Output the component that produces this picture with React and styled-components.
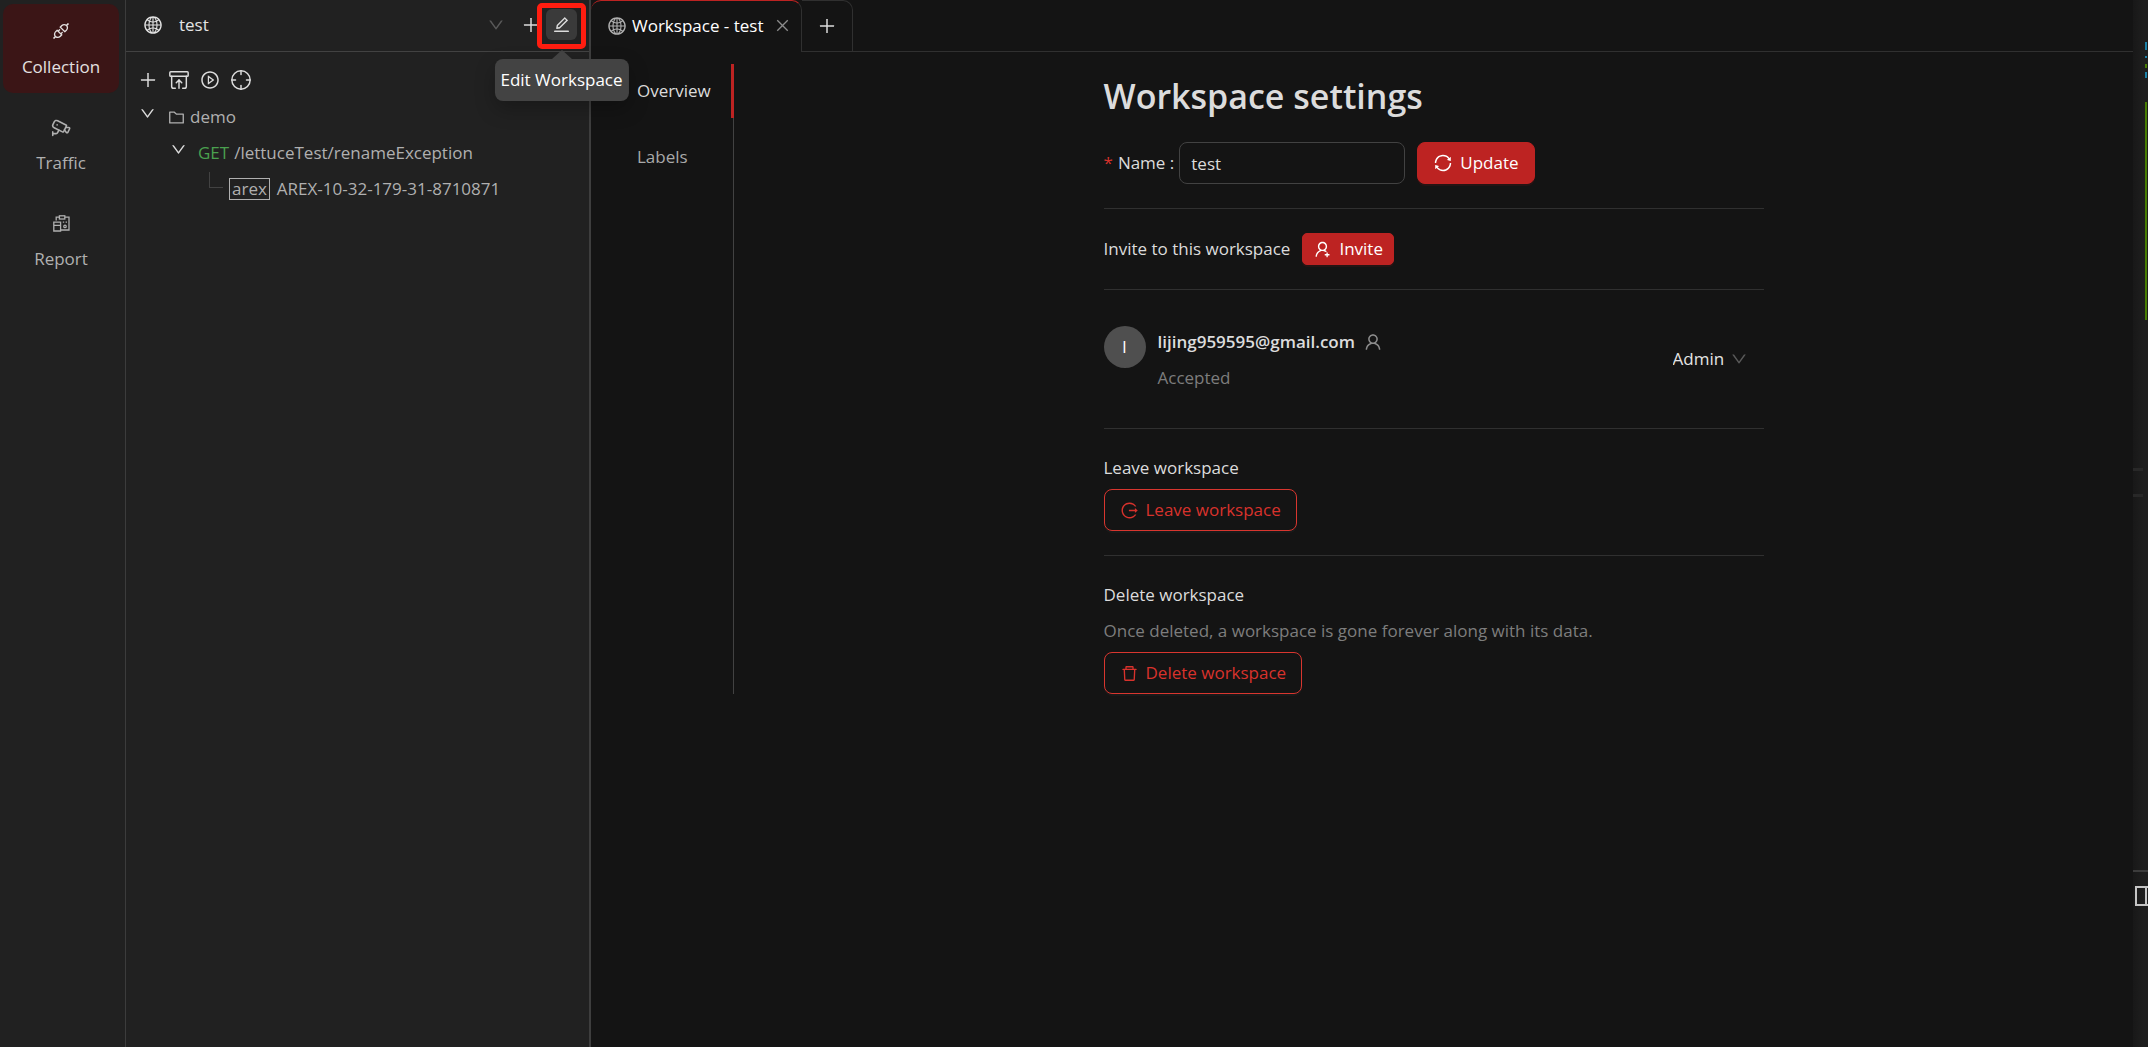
import React from "react";
import styled, { createGlobalStyle } from "styled-components";
import {
  AiOutlineApi,
  AiOutlineClose,
  AiOutlineDelete,
  AiOutlineDown,
  AiOutlineEdit,
  AiOutlineFolder,
  AiOutlineGlobal,
  AiOutlineLogout,
  AiOutlinePlayCircle,
  AiOutlinePlus,
  AiOutlineSync,
  AiOutlineUser,
  AiOutlineUserAdd,
} from "react-icons/ai";
import { ArchiveRestore, Cctv, Crosshair } from "lucide-react";

const font = '"Segoe UI", "Open Sans", "Noto Sans", sans-serif';

const GlobalStyle = createGlobalStyle`
  *, *::before, *::after { box-sizing: border-box; }
  body {
    margin: 0;
    background: #141414;
    color: #dcdcdc;
    font: 17px/28px ${font};
  }
  button, input, select { font: inherit; color: inherit; }
  button { cursor: pointer; }
  svg { flex: none; display: block; }
`;

const Shell = styled.div`
  display: flex;
  min-height: 100vh;
`;

/* Primary navigation */
const Rail = styled.nav`
  flex: none;
  width: 126px;
  padding: 4px 6px 4px 3px;
  display: flex;
  flex-direction: column;
  gap: 7px;
  background: #212121;
  border-right: 1px solid #3c3c3c;
`;

const RailItem = styled.button`
  height: 89px;
  padding: 9px 0 12px;
  border: 0;
  border-radius: 10px;
  display: flex;
  flex-direction: column;
  align-items: center;
  justify-content: space-between;
  background: ${(p) => (p.$active ? "#3b1516" : "transparent")};
  color: ${(p) => (p.$active ? "#e4e0e0" : "#b0b0b0")};
`;

const RailIcon = styled.span`
  height: 36px;
  display: flex;
  align-items: center;
`;

/* Workspace sidebar */
const Sidebar = styled.aside`
  flex: none;
  width: 465px;
  position: relative;
  z-index: 1;
  background: #212121;
  border-right: 2px solid #3e3e3e;
`;

const SidebarHeader = styled.header`
  height: 52px;
  padding: 0 12px 2px 17px;
  display: flex;
  align-items: center;
  border-bottom: 1px solid #424242;
`;

const SelectBox = styled.label`
  position: relative;
  display: flex;
  align-items: center;
  flex: ${(p) => (p.$grow ? 1 : "none")};
  color: #e4e4e4;

  & > svg.arrow {
    position: absolute;
    right: ${(p) => (p.$grow ? "10px" : "16px")};
    color: #5a5a5a;
    pointer-events: none;
  }
`;

const Select = styled.select`
  appearance: none;
  border: 0;
  outline: 0;
  background: transparent;
  flex: 1;
  height: 32px;
  padding: 0 ${(p) => p.$end}px 0 ${(p) => p.$start}px;
`;

const IconButton = styled.button`
  width: 31px;
  height: 31px;
  padding: 0;
  border: 0;
  border-radius: 6px;
  display: flex;
  align-items: center;
  justify-content: center;
  color: #dcdcdc;
  background: ${(p) => (p.$hover ? "#3a3a3a" : "transparent")};
`;

const EditAnchor = styled.div`
  position: relative;
`;

const Highlight = styled.div`
  position: absolute;
  inset: -6px -9px -9px;
  border: 5px solid #ff1d10;
  border-radius: 5px;
  pointer-events: none;
`;

const Tooltip = styled.div`
  position: absolute;
  top: 50px;
  left: 50%;
  transform: translateX(-50%);
  height: 42px;
  padding: 7px 6px;
  border-radius: 8px;
  background: #434343;
  color: #fff;
  white-space: nowrap;
  box-shadow: 0 8px 20px rgba(0, 0, 0, 0.25);

  &::before {
    content: "";
    position: absolute;
    bottom: 100%;
    left: 50%;
    margin-left: -10px;
    border: 10px solid transparent;
    border-top-width: 0;
    border-bottom: 9px solid #434343;
  }
`;

const Toolbar = styled.div`
  display: flex;
  padding: 12px 6px 4px;
`;

const Tree = styled.ul`
  list-style: none;
  margin: 0;
  padding: 0 6px;
`;

const TreeRow = styled.li`
  height: 36px;
  padding-left: ${(p) => p.$depth * 31}px;
  display: flex;
  align-items: center;
  color: #b0b0b0;
  white-space: nowrap;
`;

const Toggle = styled.span`
  width: 30px;
  height: 24px;
  display: flex;
  justify-content: center;
  color: #dcdcdc;
`;

const TreeIcon = styled.span`
  width: 28px;
  display: flex;
  justify-content: center;
`;

const Method = styled.span`
  padding: 0 5px;
  color: #4aa04f;
`;

const Elbow = styled.span`
  width: 14px;
  height: 16px;
  margin: 0 6px 18px 15px;
  border-left: 1px solid #424242;
  border-bottom: 1px solid #424242;
`;

const Tag = styled.span`
  height: 22px;
  padding: 0 2px;
  margin-right: 7px;
  border: 1px solid #b0b0b0;
  line-height: 19px;
`;

/* Workspace pane */
const Main = styled.main`
  flex: 1;
  min-width: 0;
  display: flex;
  flex-direction: column;
`;

const TabBar = styled.div`
  display: flex;
  height: 52px;

  &::after {
    content: "";
    flex: 1;
    border-bottom: 1px solid #303030;
  }
`;

const Tab = styled.div`
  width: 211px;
  padding: 0 10px 2px 16px;
  display: flex;
  align-items: center;
  gap: 5px;
  border: 1px solid #303030;
  border-top-color: #bd2322;
  border-bottom: 0;
  border-left: 0;
  border-radius: 10px 10px 0 0;
  color: #fff;
  white-space: nowrap;
`;

const AddTab = styled.button`
  width: 51px;
  padding: 0;
  display: flex;
  align-items: center;
  justify-content: center;
  background: transparent;
  border: 1px solid #303030;
  border-left: 0;
  border-radius: 0 10px 0 0;
`;

const CloseButton = styled.button`
  margin-left: auto;
  padding: 0;
  border: 0;
  background: transparent;
  color: #8c8c8c;
`;

const Pane = styled.div`
  display: flex;
  padding-top: 12px;
`;

const SideTabs = styled.div`
  flex: none;
  width: 143px;
  display: flex;
  flex-direction: column;
  gap: 12px;
  border-right: 1px solid #424242;
`;

const SideTab = styled.button`
  height: 54px;
  padding: 0 0 0 46px;
  margin-right: -1px;
  border: 0;
  border-right: 3px solid ${(p) => (p.$active ? "#bd2322" : "transparent")};
  background: transparent;
  color: ${(p) => (p.$active ? "#dcdcdc" : "#a9a9a9")};
  text-align: left;
`;

const Content = styled.section`
  flex: 1;
  display: flex;
  flex-direction: column;
  align-items: stretch;
  max-width: 660px;
  margin: 0 auto;
`;

const Title = styled.h1`
  margin: 0 0 14px;
  font-size: 34px;
  line-height: 64px;
  font-weight: 600;
`;

const Line = styled.div`
  display: flex;
  align-items: center;
  gap: 12px;
`;

const Field = styled.label`
  display: flex;
  align-items: center;
  gap: 5px;
`;

const Required = styled.span`
  color: #d8322c;
`;

const TextInput = styled.input`
  width: 226px;
  height: 42px;
  padding: 0 11px;
  border: 1px solid #424242;
  border-radius: 8px;
  outline: 0;
  background: #141414;
`;

const Button = styled.button`
  align-self: ${(p) => (p.$outlined ? "flex-start" : "auto")};
  height: ${(p) => (p.$small ? 32 : 42)}px;
  padding: 0 ${(p) => (p.$small ? 10 : 15)}px;
  border: 1px solid ${(p) => (p.$outlined ? "#d8362f" : "#bd2322")};
  border-radius: ${(p) => (p.$small ? 5 : 8)}px;
  display: flex;
  align-items: center;
  gap: 7px;
  background: ${(p) => (p.$outlined ? "transparent" : "#bd2322")};
  color: ${(p) => (p.$outlined ? "#d8322c" : "#fff")};
  box-shadow: 0 2px 0 ${(p) => (p.$outlined ? "#1a1a1a" : "#261414")};
  white-space: nowrap;
`;

const Rule = styled.hr`
  width: 100%;
  height: 1px;
  margin-top: ${(p) => (p.$flushTop ? 0 : 24)}px;
  margin-bottom: ${(p) => (p.$flushBottom ? 0 : 24)}px;
  border: 0;
  background: #303030;
`;

const Member = styled.div`
  display: flex;
  padding: 36px 0;
`;

const Avatar = styled.div`
  width: 42px;
  height: 42px;
  margin-right: 12px;
  border-radius: 50%;
  background: #4f4f4f;
  color: #fff;
  line-height: 42px;
  text-align: center;
`;

const MemberText = styled.div`
  flex: 1;
  padding-top: 2px;
  display: flex;
  flex-direction: column;
  gap: 8px;
`;

const MemberName = styled.div`
  display: flex;
  align-items: center;
  gap: 8px;
  font-weight: 600;

  svg {
    color: #8c8c8c;
  }
`;

const Muted = styled.div`
  color: #7d7d7d;
`;

const Group = styled.div`
  padding-top: 1px;
  display: flex;
  flex-direction: column;
  gap: 8px;

  & > button {
    margin-top: -1px;
  }
`;

/* Edge of the window behind */
const Edge = styled.div`
  flex: none;
  width: 15px;
  height: 100vh;
  display: flex;
  flex-direction: column;
  align-items: flex-end;
  background: linear-gradient(90deg, #181818, #1e1e1e 10px);
  overflow: hidden;
`;

const Mark = styled.div`
  flex: none;
  width: 2px;
  height: ${(p) => p.$h}px;
  margin: ${(p) => p.$gap}px 1px 0 0;
  background: ${(p) => p.$color};
`;

const Dash = styled.div`
  flex: none;
  width: ${(p) => (p.$wide ? 15 : 10)}px;
  height: ${(p) => (p.$wide ? 2 : 3)}px;
  margin: ${(p) => p.$gap}px ${(p) => (p.$wide ? 0 : 5)}px 0 0;
  background: ${(p) => (p.$wide ? "#3c3c3c" : "#282828")};
`;

const EdgeIcon = styled.svg`
  margin-top: 14px;
`;

function ReportIcon() {
  return (
    <svg width="17" height="17" viewBox="0 0 17 17" fill="none" stroke="currentColor" strokeWidth="1.3">
      <path d="M3.2 5.5V2.2h3M12 2.2h4V15H8" />
      <rect x="6.4" y="0.8" width="5.4" height="3.2" />
      <path d="M0.8 7.2h6.8v8.8H0.8zM0.8 10.4h6.8" />
      <path d="M9.8 7.2h1.4M12.6 7.2H14" />
      <circle cx="12" cy="11.4" r="1.2" />
    </svg>
  );
}

export default function App() {
  return (
    <>
      <GlobalStyle />
      <Shell>
        <Rail>
          <RailItem $active>
            <RailIcon><AiOutlineApi size={20} /></RailIcon>
            Collection
          </RailItem>
          <RailItem>
            <RailIcon><Cctv size={21} strokeWidth={1.8} /></RailIcon>
            Traffic
          </RailItem>
          <RailItem>
            <RailIcon><ReportIcon /></RailIcon>
            Report
          </RailItem>
        </Rail>

        <Sidebar>
          <SidebarHeader>
            <SelectBox $grow>
              <AiOutlineGlobal size={20} />
              <Select aria-label="Workspace" $start={16} $end={36} defaultValue="test">
                <option>test</option>
              </Select>
              <AiOutlineDown className="arrow" size={18} />
            </SelectBox>
            <IconButton aria-label="Add workspace"><AiOutlinePlus size={20} /></IconButton>
            <EditAnchor>
              <IconButton $hover aria-label="Edit"><AiOutlineEdit size={19} /></IconButton>
              <Highlight />
              <Tooltip role="tooltip">Edit Workspace</Tooltip>
            </EditAnchor>
          </SidebarHeader>

          <Toolbar>
            <IconButton aria-label="Add"><AiOutlinePlus size={20} /></IconButton>
            <IconButton aria-label="Import"><ArchiveRestore size={22} strokeWidth={1.6} /></IconButton>
            <IconButton aria-label="Run"><AiOutlinePlayCircle size={20} /></IconButton>
            <IconButton aria-label="Locate"><Crosshair size={22} strokeWidth={1.6} /></IconButton>
          </Toolbar>

          <Tree>
            <TreeRow $depth={0}>
              <Toggle><AiOutlineDown size={17} /></Toggle>
              <TreeIcon><AiOutlineFolder size={19} /></TreeIcon>
              demo
            </TreeRow>
            <TreeRow $depth={1}>
              <Toggle><AiOutlineDown size={17} /></Toggle>
              <Method>GET</Method>
              /lettuceTest/renameException
            </TreeRow>
            <TreeRow $depth={2}>
              <Elbow />
              <Tag>arex</Tag>
              AREX-10-32-179-31-8710871
            </TreeRow>
          </Tree>
        </Sidebar>

        <Main>
          <TabBar>
            <Tab>
              <AiOutlineGlobal size={20} color="#b0b0b0" />
              Workspace - test
              <CloseButton aria-label="Close tab"><AiOutlineClose size={17} /></CloseButton>
            </Tab>
            <AddTab aria-label="New tab"><AiOutlinePlus size={20} /></AddTab>
          </TabBar>

          <Pane>
            <SideTabs>
              <SideTab $active>Overview</SideTab>
              <SideTab>Labels</SideTab>
            </SideTabs>

            <Content>
              <Title>Workspace settings</Title>
              <Line>
                <Field>
                  <Required>*</Required>
                  <span>Name :</span>
                  <TextInput defaultValue="test" />
                </Field>
                <Button><AiOutlineSync size={20} />Update</Button>
              </Line>
              <Rule />
              <Line>
                Invite to this workspace
                <Button $small><AiOutlineUserAdd size={19} />Invite</Button>
              </Line>
              <Rule $flushBottom />
              <Member>
                <Avatar>l</Avatar>
                <MemberText>
                  <MemberName>
                    lijing959595@gmail.com
                    <AiOutlineUser size={20} />
                  </MemberName>
                  <Muted>Accepted</Muted>
                </MemberText>
                <SelectBox>
                  <Select aria-label="Role" $start={0} $end={39} defaultValue="Admin">
                    <option>Admin</option>
                  </Select>
                  <AiOutlineDown className="arrow" size={18} />
                </SelectBox>
              </Member>
              <Rule $flushTop />
              <Group>
                <div>Leave workspace</div>
                <Button $outlined><AiOutlineLogout size={19} />Leave workspace</Button>
              </Group>
              <Rule />
              <Group>
                <div>Delete workspace</div>
                <Muted>Once deleted, a workspace is gone forever along with its data.</Muted>
                <Button $outlined><AiOutlineDelete size={19} />Delete workspace</Button>
              </Group>
            </Content>
          </Pane>
        </Main>

        <Edge aria-hidden="true">
          <Mark $gap={42} $h={8} $color="#1b81a8" />
          <Mark $gap={6} $h={2} $color="#1b81a8" />
          <Mark $gap={6} $h={4} $color="#487e02" />
          <Mark $gap={4} $h={6} $color="#1b81a8" />
          <Mark $gap={24} $h={218} $color="#487e02" />
          <Dash $gap={148} />
          <Dash $gap={23} />
          <Dash $wide $gap={373} />
          <EdgeIcon width="13" height="20" viewBox="0 0 13 20" fill="none" stroke="#c5c5c5" strokeWidth="2">
            <path d="M13 1H1v18h12M11 1v18" />
          </EdgeIcon>
        </Edge>
      </Shell>
    </>
  );
}
